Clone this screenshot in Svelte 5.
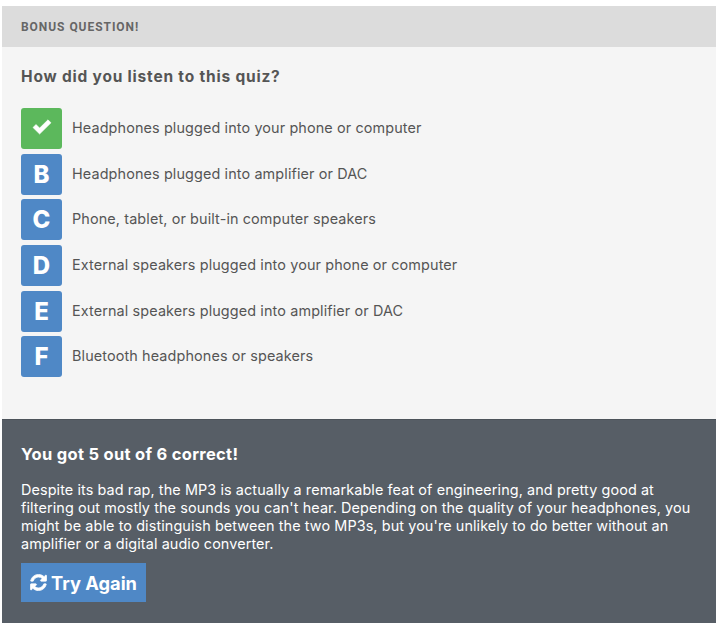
<script>
  const options = [
    { key: '', text: 'Headphones plugged into your phone or computer', correct: true },
    { key: 'B', text: 'Headphones plugged into amplifier or DAC' },
    { key: 'C', text: 'Phone, tablet, or built-in computer speakers' },
    { key: 'D', text: 'External speakers plugged into your phone or computer' },
    { key: 'E', text: 'External speakers plugged into amplifier or DAC' },
    { key: 'F', text: 'Bluetooth headphones or speakers' }
  ];
</script>

<main class="quiz">
  <section class="card">
    <header class="bar">BONUS QUESTION!</header>
    <div class="body">
      <h2>How did you listen to this quiz?</h2>
      <ul>
        {#each options as o}
          <li>
            <span class="badge" class:correct={o.correct}>
              {#if o.correct}
                <svg class="check" viewBox="0 0 20 16" width="20" height="16" aria-hidden="true"><path d="M1 8.500 4 5.500l3.600 3.600L16 .8l3 3L7.600 15z" fill="#fff" stroke="#fff" stroke-width=".6" stroke-linejoin="round"/></svg>
              {:else}
                {o.key}
              {/if}
            </span>
            <span class="label">{o.text}</span>
          </li>
        {/each}
      </ul>
    </div>
  </section>
  <section class="result">
    <h3>You got 5 out of 6 correct!</h3>
    <p>Despite its bad rap, the MP3 is actually a remarkable feat of engineering, and pretty good at filtering out mostly the sounds you can't hear. Depending on the quality of your headphones, you might be able to distinguish between the two MP3s, but you're unlikely to do better without an amplifier or a digital audio converter.</p>
    <button type="button">
      <svg viewBox="-40 -40 1616 1616" width="17" height="17" aria-hidden="true"><path fill="#fff" stroke="#fff" stroke-width="70" stroke-linejoin="round" d="M1511 928q0 5-1 7-64 268-268 434.500T764 1536q-146 0-282.500-55T238 1324l-129 129q-19 19-45 19t-45-19-19-45V960q0-26 19-45t45-19h448q26 0 45 19t19 45-19 45L420 1142q71 66 161 102t187 36q134 0 250-65t186-179q11-17 53-117 8-23 30-23h192q13 0 22.500 9.500T1511 928zm25-800v448q0 26-19 45t-45 19h-448q-26 0-45-19t-19-45 19-45l138-138q-148-137-349-137-134 0-250 65T332 500q-11 17-53 117-8 23-30 23H50q-13 0-22.500-9.500T18 608v-7q65-268 270-434.500T768 0q146 0 284 55.500T1297 212l130-129q19-19 45-19t45 19 19 45z"/></svg>
      Try Again
    </button>
  </section>
</main>

<style>
  :global(body) { margin: 0; background: #fff; }
  .quiz {
    width: 714px;
    margin: 6px 0 0 2px;
    font-family: "Inter", "Liberation Sans", sans-serif;
  }
  .card { background: #f5f5f5; height: 413px; }
  .bar {
    height: 41px;
    box-sizing: border-box;
    padding: 0 19px;
    display: flex;
    align-items: center;
    background: #dcdcdc;
    color: #666;
    font: 700 12px/1 "Roboto", sans-serif;
    letter-spacing: 0.95px;
  }
  .body { padding: 21px 19px 0; }
  h2 {
    margin: 0 0 22px;
    font-size: 15.5px;
    line-height: 18px;
    font-weight: 700;
    letter-spacing: 0.8px;
    color: #555;
  }
  ul { list-style: none; margin: 0; padding: 0; }
  li { display: flex; align-items: center; gap: 10px; height: 41px; margin-bottom: 4.7px; }
  .badge {
    width: 41px;
    height: 41px;
    flex: none;
    display: flex;
    align-items: center;
    justify-content: center;
    border-radius: 3px;
    background: #4f88c6;
    color: #fff;
    font-size: 24px;
    font-weight: 800;
  }
  .badge.correct { background: #5cb85c; }
  .check { margin-bottom: 3px; }
  .label { font-size: 14.4px; line-height: 18px; padding-bottom: 1px; color: #555; letter-spacing: 0.12px; }
  .result {
    height: 204px;
    box-sizing: border-box;
    padding: 24px 19px 0;
    background: #575e66;
    border-top: 1px solid #4c535a;
    color: #fff;
  }
  h3 { margin: 0 0 17px; font-size: 16.5px; line-height: 20px; font-weight: 700; letter-spacing: 0.3px; }
  p { margin: 0 0 10px; font-size: 14.4px; line-height: 18px; letter-spacing: 0.1px; }
  button {
    display: flex;
    align-items: center;
    gap: 4px;
    height: 39px;
    padding: 0 9px;
    border: 0;
    background: #4f88c6;
    color: #fff;
    font-family: inherit;
    font-size: 18.3px;
    font-weight: 700;
  }
</style>
